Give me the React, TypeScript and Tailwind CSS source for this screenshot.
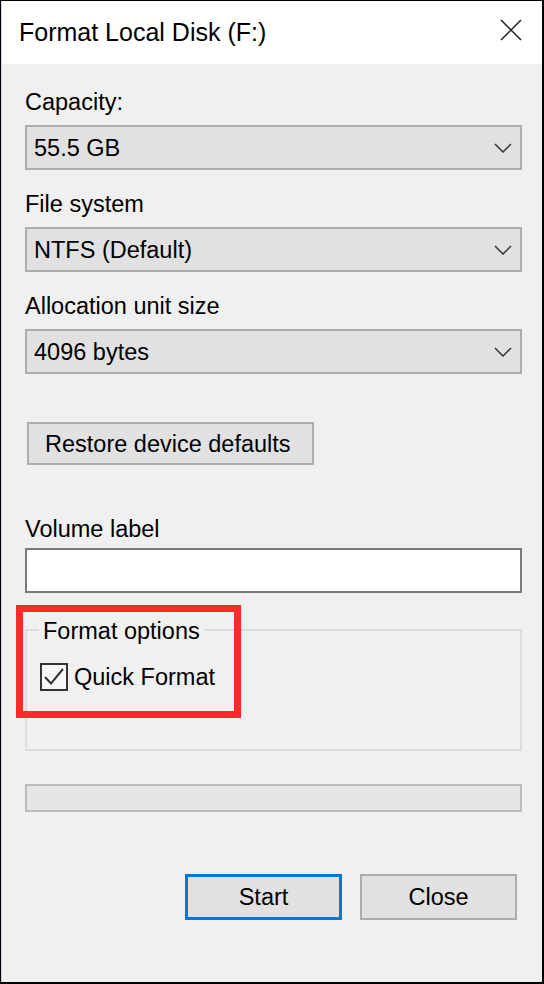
import React from 'react';

const font = { fontFamily: '"Liberation Sans", Arial, sans-serif' };

function Chevron() {
  return (
    <svg width="18" height="10" viewBox="0 0 18 10" fill="none">
      <path d="M1 1 L9 9 L17 1" stroke="#333" strokeWidth="1.5" />
    </svg>
  );
}

function Select({ value }: { value: string }) {
  return (
    <div className="h-[45px] border-2 border-[#adadad] bg-[#e1e1e1] flex items-center justify-between pl-[7px] pr-[8px]">
      <span className="leading-[28px]">{value}</span>
      <Chevron />
    </div>
  );
}

function Label({ text, className = '' }: { text: string; className?: string }) {
  return <div className={`h-[28px] leading-[28px] ${className}`}>{text}</div>;
}

export default function App() {
  return (
    <div
      className="relative w-[544px] h-[984px] bg-black pt-px pl-px pr-[2px] pb-[2px] text-black"
      style={font}
    >
      <div className="w-full h-full flex flex-col border-l border-[#c9d6e3]">
        {/* Title bar */}
        <div className="h-[63px] bg-white flex items-start justify-between pl-[17px] pr-[20px]">
          <span className="mt-[17px] text-[25px] leading-[28px]">Format Local Disk (F:)</span>
          <svg className="mt-[18px]" width="22" height="22" viewBox="0 0 22 22" fill="none">
            <path d="M1 1 L21 21 M21 1 L1 21" stroke="#222" strokeWidth="1.5" />
          </svg>
        </div>

        {/* Body */}
        <div className="flex-1 bg-[#f0f0f0] pl-[23px] pr-[20px] pt-[24px] text-[23.5px] flex flex-col">
          <Label text="Capacity:" />
          <div className="mt-[9px]">
            <Select value="55.5 GB" />
          </div>
          <Label text="File system" className="mt-[20px]" />
          <div className="mt-[9px]">
            <Select value="NTFS (Default)" />
          </div>
          <Label text="Allocation unit size" className="mt-[20px]" />
          <div className="mt-[9px]">
            <Select value="4096 bytes" />
          </div>

          <div className="mt-[48px] pl-[2px]">
            <button className="w-[287px] h-[43px] border-2 border-[#adadad] bg-[#e1e1e1] flex items-center pl-[16px] leading-[28px]">
              Restore device defaults
            </button>
          </div>

          <Label text="Volume label" className="mt-[50px]" />
          <div className="mt-[5px] h-[45px] border-2 border-[#7a7a7a] bg-white" />

          {/* Format options group */}
          <div className="relative mt-[36px] h-[122px] border-2 border-[#dcdcdc] pt-[32px] pl-[13px]">
            <span className="absolute left-[12px] -top-[14px] px-[4px] bg-[#f0f0f0] leading-[28px]">
              Format options
            </span>
            <div className="flex items-start gap-[6px]">
              <div className="w-[28px] h-[28px] border-2 border-[#333] bg-[#f7f7f7] flex items-center justify-center">
                <svg width="24" height="24" viewBox="0 0 24 24" fill="none">
                  <path d="M3 12 L9 18.5 L21 4" stroke="#333" strokeWidth="2" />
                </svg>
              </div>
              <span className="leading-[28px]">Quick Format</span>
            </div>
          </div>

          {/* Progress bar */}
          <div className="mt-[33px] h-[28px] border-2 border-[#bcbcbc] bg-[#e6e6e6]" />

          {/* Buttons */}
          <div className="mt-[62px] flex justify-end gap-[18px] pr-[5px]">
            <button className="w-[157px] h-[46px] border-[3px] border-[#0078d7] bg-[#e1e1e1] flex items-center justify-center leading-[28px]">
              Start
            </button>
            <button className="w-[157px] h-[46px] border-2 border-[#adadad] bg-[#e1e1e1] flex items-center justify-center leading-[28px]">
              Close
            </button>
          </div>
        </div>
      </div>

      {/* Red highlight annotation */}
      <div className="absolute left-[16px] top-[605px] w-[225px] h-[113px] border-[7px] border-[#ff2b2b] pointer-events-none" />
    </div>
  );
}
